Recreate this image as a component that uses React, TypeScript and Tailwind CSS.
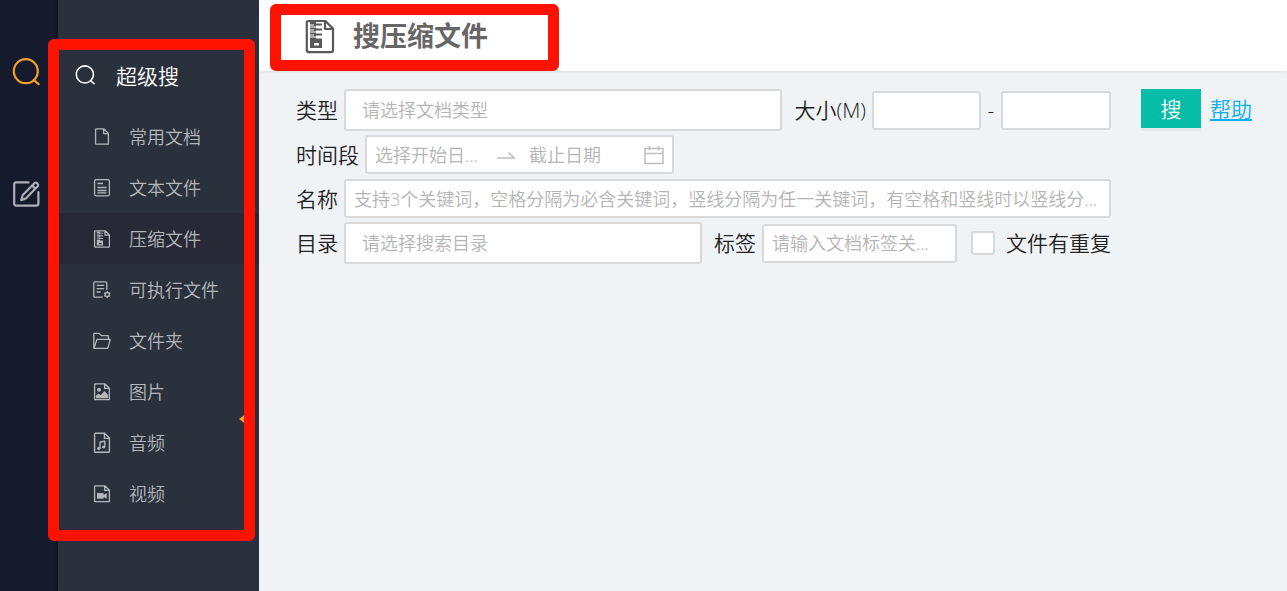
import React from "react";

type IconProps = { className?: string };

function Glyph({ className, children }: { className?: string; children: React.ReactNode }) {
  return (
    <svg
      viewBox="0 0 18 18"
      className={className ?? "size-[18px] shrink-0"}
      fill="none"
      stroke="currentColor"
      strokeWidth="1.3"
      strokeLinejoin="round"
      aria-hidden="true"
    >
      {children}
    </svg>
  );
}

const DocIcon = () => (
  <Glyph>
    <path d="M3.2.8H10.8L15.4 5.4V16.2H3.2Q2.6 16.2 2.6 15.6V1.4Q2.6.8 3.2.8ZM10.6.8V5.6H15.4" />
  </Glyph>
);
const TextIcon = () => (
  <Glyph>
    <rect x="1.6" y="0.6" width="14.8" height="16.2" rx="1.5" />
    <path d="M4.5 4.5H10M4.5 8.5H13.5M4.5 11.5H13.5M4.5 13.8H13.5" />
  </Glyph>
);

const ZIPPER = "M5 2.5H11V4.5H17V6.5H11V7.5H5V6.5H9V5.5H5ZM5 8.5H11V9.5H17V11.5H11V12.5H5V11.5H9V10.5H5ZM5 13.5H11V14.5H17V16.5H11V17.5H5V16.5H9V15.5H5ZM5 18.5H11V19.5H17V29H5ZM9 24V26.5H14V24Z";

const ZipIcon = () => (
  <Glyph>
    <path d="M2.6.8H12.2L16.4 5V16.4Q16.4 17.2 15.6 17.2H2.4Q1.6 17.2 1.6 16.4V1.6Q1.6.8 2.6.8ZM12 .8V5.2H16.4" />
    <path d={ZIPPER} transform="translate(1.2 .4) scale(.52)" fill="currentColor" fillRule="evenodd" stroke="none" />
  </Glyph>
);
const ExecIcon = () => (
  <Glyph>
    <path d="M9.8 16.2H1.8Q.8 16.2.8 15.2V1.8Q.8.8 1.8.8H12.8Q13.8.8 13.8 1.8V9M3.6 4.4H11.2M3.6 7.6H11.2M3.6 11H7.6" />
    <circle cx="14.2" cy="13.6" r="2.1" />
    <path d="M14.2 10.2V11.5M14.2 15.7V17M11.2 11.9L12.4 12.6M16 14.6L17.2 15.3M11.2 15.3L12.4 14.6M16 12.6L17.2 11.9" />
  </Glyph>
);
const FolderIcon = () => (
  <Glyph>
    <path d="M.8 16V2Q.8 1.4 1.4 1.4H6.2L8.4 3.6H14.6Q15.4 3.6 15.4 4.4V7.2M1 16.4L3.8 7.8Q4 7.3 4.5 7.3H17.3L15 15.7Q14.8 16.4 14.2 16.4H1.4Q.8 16.4.8 15.8" />
  </Glyph>
);
const PictureIcon = () => (
  <Glyph>
    <path d="M2.2.8H11.8L16.4 5.2V16.6H1.6V1.4Q1.6.8 2.2.8ZM11.6.8V5.4H16.4" />
    <circle cx="6" cy="6.8" r="2" fill="currentColor" stroke="none" />
    <path d="M3 15.2V12.6L5.6 10.4L7.6 12.2L11.4 8L15.1 11.8V15.2Z" fill="currentColor" stroke="none" />
  </Glyph>
);
const MusicIcon = () => (
  <svg viewBox="0 0 18 22" className="h-[22px] w-[18px] shrink-0" fill="none" stroke="currentColor" strokeWidth="1.4" strokeLinejoin="round" aria-hidden="true">
    <path d="M2.4 1.2H11.6L16.4 6V19.4Q16.4 20.2 15.6 20.2H2.4Q1.6 20.2 1.6 19.4V2Q1.6 1.2 2.4 1.2ZM11.4 1.2V6.4H16.4" />
    <path d="M7 16.4V10.2L11.8 9V15" />
    <ellipse cx="5.8" cy="16.5" rx="1.7" ry="1.4" fill="currentColor" stroke="none" />
    <ellipse cx="10.6" cy="15.1" rx="1.7" ry="1.4" fill="currentColor" stroke="none" />
  </svg>
);
const VideoIcon = () => (
  <Glyph>
    <path d="M2.2.8H11.8L16.4 5.2V16.6H1.6V1.4Q1.6.8 2.2.8ZM11.6.8V5.4H16.4" />
    <path d="M4 8H10.6V10L13.8 8V13.8L10.6 12V13.8H4Z" fill="currentColor" stroke="none" />
  </Glyph>
);

const SearchIcon = ({ className }: IconProps) => (
  <svg viewBox="0 0 28 28" className={className} fill="none" stroke="currentColor" strokeWidth="2.2" strokeLinecap="round" aria-hidden="true">
    <circle cx="13.8" cy="13.2" r="12" />
    <path d="M21.8 22L26.6 26.2" />
  </svg>
);

const EditIcon = () => (
  <svg viewBox="0 0 28 28" className="size-7" fill="none" stroke="currentColor" strokeWidth="2.2" strokeLinejoin="round" strokeLinecap="round" aria-hidden="true">
    <path d="M16.5 2.4H4.2Q2.2 2.4 2.2 4.4V23.6Q2.2 25.6 4.2 25.6H24.4Q26.4 25.6 26.4 23.6V12.2" />
    <path d="M9.2 20.2L10.8 15L22.4 3.2Q23.8 2 25.4 3.4Q26.8 5 25.4 6.6L13.8 18.4ZM20.2 5.6L23.2 8.6" />
  </svg>
);

const TitleZipIcon = () => (
  <svg viewBox="0 0 30 36" className="h-9 w-[30px]" fill="none" stroke="currentColor" strokeWidth="2.2" strokeLinejoin="round" aria-hidden="true">
    <path d="M3.4 3H20.4L28 10.6V32Q28 34.2 25.8 34.2H4Q1.8 34.2 1.8 32V4.6Q1.8 3 3.4 3ZM20 3V11H28" />
    <path d={ZIPPER} transform="translate(0 1)" fill="currentColor" fillRule="evenodd" stroke="none" />
  </svg>
);

const menu = [
  { label: "常用文档", Icon: DocIcon },
  { label: "文本文件", Icon: TextIcon },
  { label: "压缩文件", Icon: ZipIcon, active: true },
  { label: "可执行文件", Icon: ExecIcon },
  { label: "文件夹", Icon: FolderIcon },
  { label: "图片", Icon: PictureIcon },
  { label: "音频", Icon: MusicIcon },
  { label: "视频", Icon: VideoIcon },
];

const field = "rounded-[3px] border-2 border-[#d9d9d9] bg-white text-lg text-[#333] placeholder:text-[#b4b4b4] outline-none";

export default function App() {
  return (
    <div className="flex min-h-screen bg-[#eff3f6] font-['Open_Sans','Noto_Sans_CJK_SC',sans-serif] font-[350]">
      <nav aria-label="主导航" className="flex w-[58px] shrink-0 flex-col items-start gap-[94px] bg-[#161a2d] pt-[58px] pl-3">
        <button aria-label="搜索" className="text-[#f5a02c]"><SearchIcon className="size-7" /></button>
        <button aria-label="编辑" className="text-[#adafb5]"><EditIcon /></button>
      </nav>

      <aside className="relative w-[201px] shrink-0 bg-[#2b303d] shadow-[-2px_0_3px_rgba(0,0,0,0.35)]">
        <h2 className="flex h-[111px] items-center gap-[21px] pt-[42px] pl-[17px] text-[21px] leading-[69px] text-white">
          <SearchIcon className="mb-1 size-5" />
          超级搜
        </h2>
        <ul>
          {menu.map(({ label, Icon, active }) => (
            <li key={label}>
              <a
                href="#"
                aria-current={active ? "page" : undefined}
                className={`flex h-[51px] items-center gap-[18px] pl-[35px] text-lg text-[#b4b6ba] ${active ? "bg-[#272a36]" : ""}`}
              >
                <Icon />
                {label}
              </a>
            </li>
          ))}
        </ul>
        <button aria-label="收起菜单" className="absolute top-[413px] left-[181px] text-[#f5a02c]">
          <svg viewBox="0 0 8 12" className="h-3 w-2" fill="currentColor" aria-hidden="true"><path d="M0 6L8 0V12Z" /></svg>
        </button>
        <div className="pointer-events-none absolute top-[39px] right-1 -left-[10px] h-[502px] rounded-[6px] border-[11px] border-[#ff1200]" />
      </aside>

      <div className="min-w-0 flex-1">
        <header className="relative flex h-[71px] items-center gap-[18px] bg-white pl-[46px] text-[#595959] shadow-[0_2px_2px_rgba(0,0,0,0.05)]">
          <TitleZipIcon />
          <h1 className="text-[27px] leading-9 font-bold text-[#666]">搜压缩文件</h1>
          <div className="pointer-events-none absolute top-1 left-[11px] h-[67px] w-[289px] rounded-[6px] border-[11px] border-[#ff1200]" />
        </header>

        <form className="flex items-start gap-[30px] pt-[18px] pr-[35px] pl-[37px] text-[21px] leading-8 text-[#222]">
          <div className="flex min-w-0 flex-1 flex-col gap-1">
            <div className="flex items-center">
              <label htmlFor="type" className="mr-1.5">类型</label>
              <select id="type" defaultValue="" className={`${field} h-[42px] min-w-0 flex-1 appearance-none px-4 text-[#b4b4b4]`}>
                <option value="">请选择文档类型</option>
              </select>
              <label htmlFor="min" className="mr-1.5 ml-3">大小(M)</label>
              <input id="min" className={`${field} h-[39px] w-[109px] px-2`} />
              <span className="w-5 text-center">-</span>
              <input aria-label="最大" className={`${field} h-[39px] w-[110px] px-2`} />
            </div>
            <div className="flex h-10 items-start">
              <label htmlFor="start" className="mt-1 mr-1.5">时间段</label>
              <div className={`${field} flex h-[39px] w-[309px] items-center pr-2 pl-2`}>
                <input id="start" placeholder="选择开始日..." className="w-[122px] outline-none placeholder:text-[#b4b4b4]" />
                <svg viewBox="0 0 18 8" className="h-2 w-[18px] shrink-0" fill="none" stroke="#bfbfbf" strokeWidth="1.6" aria-hidden="true"><path d="M0 7H17L11.5 1.5" /></svg>
                <input aria-label="截止日期" placeholder="截止日期" className="ml-3.5 min-w-0 flex-1 outline-none placeholder:text-[#b4b4b4]" />
                <svg viewBox="0 0 20 20" className="size-5 shrink-0" fill="none" stroke="#bfbfbf" strokeWidth="1.5" aria-hidden="true"><path d="M1 3.5H19V18.5H1ZM1 8.5H19M5.5 1V5.5M14.5 1V5.5" /></svg>
              </div>
            </div>
            <div className="flex items-center">
              <label htmlFor="name" className="mr-1.5">名称</label>
              <input id="name" placeholder="支持3个关键词，空格分隔为必含关键词，竖线分隔为任一关键词，有空格和竖线时以竖线分..." className={`${field} h-[39px] min-w-0 flex-1 px-2`} />
            </div>
            <div className="flex items-center">
              <label htmlFor="dir" className="mr-1.5">目录</label>
              <select id="dir" defaultValue="" className={`${field} h-[42px] min-w-0 flex-1 appearance-none px-4 text-[#b4b4b4]`}>
                <option value="">请选择搜索目录</option>
              </select>
              <label htmlFor="tag" className="mr-1.5 ml-3">标签</label>
              <input id="tag" placeholder="请输入文档标签关..." className={`${field} h-[39px] w-[195px] px-2`} />
              <label className="ml-3.5 flex items-center gap-[11px]">
                <input type="checkbox" className="size-6 appearance-none rounded-[3px] border-2 border-[#d9d9d9] bg-white" />
                文件有重复
              </label>
            </div>
          </div>
          <div className="flex items-center gap-[9px]">
            <button type="button" className="h-[39px] w-[60px] bg-[#05bda6] text-white shadow-[0_3px_0_rgba(0,0,0,0.04)]">搜</button>
            <a href="#" className="text-[#08aef0] underline">帮助</a>
          </div>
        </form>
      </div>
    </div>
  );
}
